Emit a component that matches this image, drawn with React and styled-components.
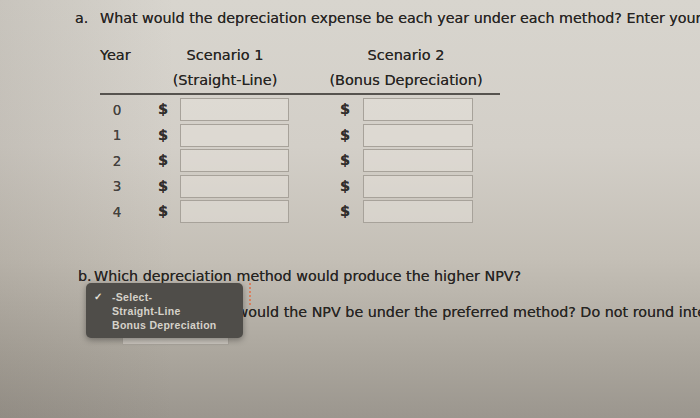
import React from 'react';
import styled, { createGlobalStyle } from 'styled-components';

const GlobalStyle = createGlobalStyle`
  html, body {
    margin: 0;
    padding: 0;
    width: 700px;
    height: 418px;
    overflow: hidden;
  }
  body {
    font-family: "DejaVu Sans", Verdana, sans-serif;
    color: #262422;
    text-shadow: 0 0 0.6px rgba(20, 18, 16, 0.7);
    background:
      linear-gradient(90deg, rgba(60, 50, 40, 0.1) 0%, rgba(60, 50, 40, 0) 25%),
      linear-gradient(180deg, #d8d5ce 0%, #d3cfc8 35%, #c4bfb6 62%, #aba69d 85%, #9b968e 100%);
  }
`;

const Page = styled.div`
  position: relative;
  padding: 8px 0 0 75px;
  font-size: 14.3px;
`;

const Question = styled.div`
  line-height: 20px;
  white-space: nowrap;
  margin-left: ${p => p.indent || 0}px;
  margin-top: ${p => p.top || 0}px;
`;

const Label = styled.span`
  display: inline-block;
  width: ${p => p.w}px;
`;

const Dotted = styled.span`
  border-bottom: 1px dotted #555;
`;

const Table = styled.div`
  width: 400px;
  margin: 15px 0 0 25px;
  font-size: 14.5px;
`;

const HeadRow = styled.div`
  display: grid;
  grid-template-columns: 60px 130px 36px 160px;
  line-height: 25px;
  white-space: nowrap;
`;

const HeadCell = styled.div`
  grid-column: ${p => p.col};
  text-align: ${p => (p.left ? 'left' : 'center')};
`;

const Rule = styled.div`
  height: 2px;
  background: #56534f;
  margin-bottom: 2px;
`;

const Row = styled.div`
  display: flex;
  align-items: center;
  height: 25.5px;
`;

const YearCell = styled.div`
  width: 34px;
  text-align: center;
  font-size: 13.5px;
  color: #44413e;
`;

const Dollar = styled.div`
  width: ${p => p.w}px;
  padding-right: ${p => p.pad}px;
  box-sizing: border-box;
  text-align: right;
  font-weight: bold;
  font-size: 14.5px;
  line-height: 17px;
  color: #302e2b;
`;

const Box = styled.div`
  width: ${p => p.w}px;
  height: 23px;
  flex-shrink: 0;
  box-sizing: border-box;
  border: 1.5px solid #a7a29a;
  background: rgba(232, 228, 221, 0.45);
`;

const SelectBox = styled.div`
  width: 157px;
  height: 22px;
  margin: -3px 0 -3px 19px;
  box-sizing: border-box;
  border-right: 2px dotted #d9805f;
`;

const AnswerRow = styled.div`
  display: flex;
  align-items: flex-start;
  margin: 0 0 0 19px;
`;

const Popup = styled.div`
  position: absolute;
  left: 86px;
  top: 283px;
  width: 157px;
  padding: 7px 0 6px;
  box-sizing: border-box;
  border-radius: 5px;
  background: #4f4d49;
  box-shadow: 0 2px 6px rgba(0, 0, 0, 0.35);
  font-family: "Liberation Sans", Arial, sans-serif;
  font-weight: bold;
  font-size: 10.5px;
  letter-spacing: 0.3px;
  color: #d6d2ca;
  text-shadow: none;
`;

const Item = styled.div`
  display: flex;
  align-items: center;
  line-height: 14px;
  white-space: nowrap;
`;

const Check = styled.span`
  width: 26px;
  padding-left: 8px;
  box-sizing: border-box;
  font-size: 10px;
  color: #e4e0d8;
`;

const options = ['-Select-', 'Straight-Line', 'Bonus Depreciation'];

export default function App() {
  return (
    <>
      <GlobalStyle />
      <Page>
        <Question>
          <Label w={25}>a.</Label>What would the depreciation expense be each year under each method? Enter your answers
        </Question>
        <Table>
          <HeadRow>
            <HeadCell col={1} left>Year</HeadCell>
            <HeadCell col={2}>Scenario 1</HeadCell>
            <HeadCell col={4}>Scenario 2</HeadCell>
          </HeadRow>
          <HeadRow>
            <HeadCell col={2}>(Straight-Line)</HeadCell>
            <HeadCell col={4}>(Bonus Depreciation)</HeadCell>
          </HeadRow>
          <Rule />
          {[0, 1, 2, 3, 4].map(y => (
            <Row key={y}>
              <YearCell>{y}</YearCell>
              <Dollar w={46} pad={12}>$</Dollar>
              <Box w={109} />
              <Dollar w={74} pad={13}>$</Dollar>
              <Box w={110} />
            </Row>
          ))}
        </Table>
        <Question indent={3} top={41}>
          <Label w={16}>b.</Label><Dotted>Which depreciation</Dotted> method would produce the higher NPV?
        </Question>
        <SelectBox />
        <Question indent={15}>
          <Label w={16}>c.</Label>How much higher would the NPV be under the preferred method? Do not round intermediate
        </Question>
        <AnswerRow>
          <Dollar w={28} pad={8}>$</Dollar>
          <Box w={107} />
        </AnswerRow>
        <Popup>
          {options.map((o, i) => (
            <Item key={o}>
              <Check>{i === 0 ? '✓' : ''}</Check>
              {o}
            </Item>
          ))}
        </Popup>
      </Page>
    </>
  );
}
